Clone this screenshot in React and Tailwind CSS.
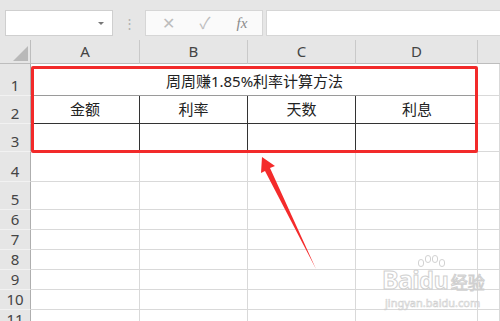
import React from 'react';

const cols = ['A', 'B', 'C', 'D'];
const rowHeights = [32, 28, 28, 30, 28, 20, 20, 20, 20, 20, 20];
const font = { fontFamily: '"Noto Sans", "Noto Sans CJK SC", sans-serif' };
const ghost = (w) => ({ color: 'transparent', WebkitTextStroke: `${w}px #d0d0d0` });

const Toolbar = () => (
  <div className="h-[40px] bg-[#e6e6e6] relative flex items-start pt-[10px] pl-[5px]">
    <div className="w-[108px] h-[26px] bg-white border border-[#cfcfcf] flex items-center justify-end pr-[8px]">
      <span className="w-0 h-0 border-l-[3px] border-r-[3px] border-t-[3px] border-l-transparent border-r-transparent border-t-[#777]" />
    </div>
    <div className="w-[32px] h-[26px] flex items-center justify-center text-[#b0b0b0] text-[13px] leading-none">⋮</div>
    <div className="w-[118px] h-[26px] bg-[#fafafa] border border-[#d6d6d6] flex items-center text-[#bdbdbd]">
      <span className="w-[40px] text-center text-[16px] leading-none pl-[4px]">✕</span>
      <span className="w-[38px] text-center text-[16px] leading-none">✓</span>
      <span className="w-[36px] text-center text-[15px] italic text-[#8a8a8a]" style={{ fontFamily: '"Liberation Serif", serif' }}>fx</span>
    </div>
    <div className="w-[3px]" />
    <div className="flex-1 h-[26px] bg-white border border-[#d6d6d6] border-r-0" />
  </div>
);

const HeaderRow = () => (
  <>
    <div className="bg-[#e6e6e6] border-r border-b border-[#bdbdbd] relative">
      <div className="absolute right-[2px] bottom-[2px] w-0 h-0 border-l-[15px] border-l-transparent border-b-[15px] border-b-[#b9b9b9]" />
    </div>
    {cols.map((c) => (
      <div key={c} className="bg-[#e6e6e6] border-r border-b border-[#c9c9c9] border-b-[#bdbdbd] flex items-end justify-center pb-[1px] text-[15px] text-[#444]">
        {c}
      </div>
    ))}
    <div className="bg-[#e6e6e6] border-b border-[#bdbdbd]" />
  </>
);

const RowLabel = ({ n }) => (
  <div className="bg-[#e6e6e6] border-r border-[#aeaeae] border-b border-b-[#f2f2f2] flex items-end justify-center pb-[1px] text-[15px] leading-[18px] text-[#444]">
    {n}
  </div>
);

const Blank = () => <div className="bg-white border-r border-b border-[#d9d9d9]" />;

const Watermark = () => (
  <div className="absolute left-[382px] top-[255px] select-none" style={font}>
    <div className="absolute left-[36px] top-0 flex items-start gap-[1px]">
      <span className="w-[6px] h-[8px] rounded-full border border-[#d2d2d2] mt-[4px]" />
      <span className="w-[6px] h-[8px] rounded-full border border-[#d2d2d2]" />
      <span className="w-[6px] h-[8px] rounded-full border border-[#d2d2d2]" />
      <span className="w-[6px] h-[8px] rounded-full border border-[#d2d2d2] mt-[4px]" />
    </div>
    <div className="flex items-end pt-[12px] leading-none">
      <span className="text-[25px] font-bold tracking-tight" style={ghost(1)}>Bai</span>
      <span className="text-[23px] font-bold" style={ghost(1)}>du</span>
      <span className="text-[17px] ml-[2px] mb-[1px]" style={ghost(1)}>经验</span>
    </div>
    <div className="text-[11px] leading-none mt-[5px] ml-[3px]" style={ghost(0.6)}>jingyan.baidu.com</div>
  </div>
);

export default function App() {
  return (
    <div className="w-[500px] h-[321px] overflow-hidden relative bg-white" style={font}>
      <Toolbar />
      <div className="grid grid-cols-[31px_109px_108px_108px_122px_1fr] grid-rows-[24px_32px_28px_28px_30px_28px_20px_20px_20px_20px_20px_20px]">
        <HeaderRow />

        <RowLabel n={1} />
        <div className="col-span-4 bg-white border-b border-[#9a9a9a] flex items-center justify-center text-[15px] text-[#222] pt-[4px]">
          周周赚1.85%利率计算方法
        </div>
        <Blank />

        <RowLabel n={2} />
        {['金额', '利率', '天数', '利息'].map((t, i) => (
          <div key={t} className={`bg-white border-b border-[#333] ${i < 3 ? 'border-r' : ''} flex items-center justify-center text-[15px] text-[#222]`}>
            {t}
          </div>
        ))}
        <Blank />

        <RowLabel n={3} />
        {[0, 1, 2, 3].map((i) => (
          <div key={i} className={`bg-white border-b border-[#d9d9d9] ${i < 3 ? 'border-r border-r-[#333]' : ''}`} />
        ))}
        <Blank />

        {rowHeights.slice(3).map((h, idx) => (
          <React.Fragment key={idx}>
            <RowLabel n={idx + 4} />
            <Blank />
            <Blank />
            <Blank />
            <Blank />
            <Blank />
          </React.Fragment>
        ))}
      </div>

      {/* red highlight box */}
      <div className="absolute left-[31px] top-[66px] w-[447px] h-[87px] border-[3px] border-[#f22a2a] rounded-[2px]" />

      {/* red arrow */}
      <svg className="absolute left-0 top-0" width="500" height="321" viewBox="0 0 500 321">
        <polygon points="262,157 275,166 270,168 316,269 265,171 261,173" fill="#f42b2b" />
      </svg>

      <Watermark />
    </div>
  );
}
